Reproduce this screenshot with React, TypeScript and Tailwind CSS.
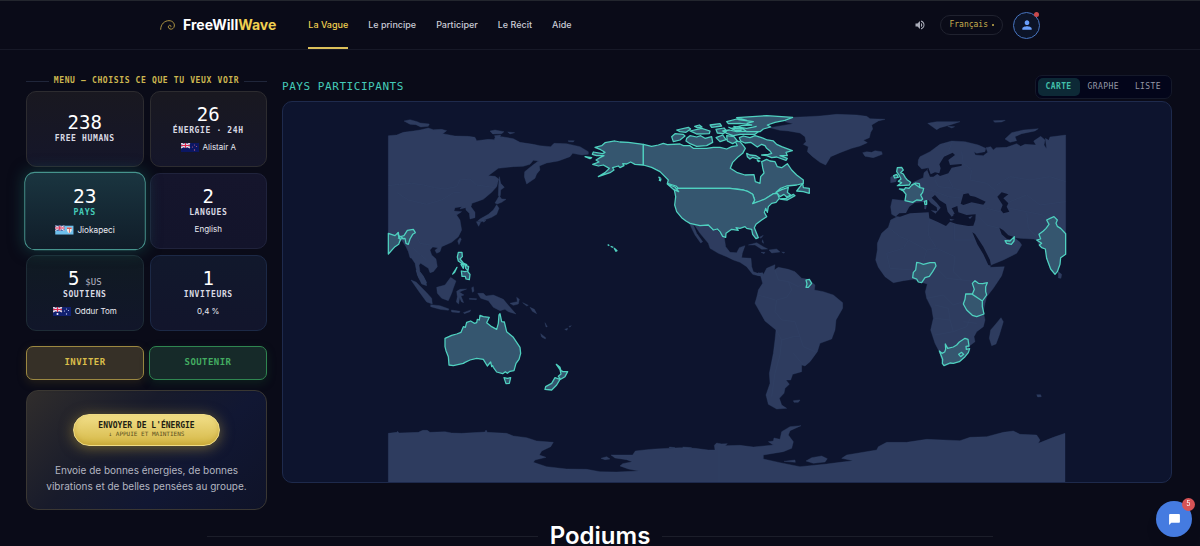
import React, { useState } from "react";
import { MdChatBubble, MdPerson, MdVolumeUp } from "react-icons/md";

const MONO = "font-['DejaVu_Sans_Mono',monospace]";

const navLinks = ["La Vague", "Le principe", "Participer", "Le Récit", "Aide"];
const views = ["Carte", "Graphe", "Liste"];

type FlagCode = "nz" | "fj" | "au";

const Flag: React.FC<{ code: FlagCode }> = ({ code }) => {
  const field = code === "fj" ? "#6fc0ec" : code === "nz" ? "#0b1763" : "#10206f";
  return (
    <svg viewBox="0 0 36 18" className="h-[9px] w-[18px]" aria-hidden="true">
      <rect width="36" height="18" fill={field} />
      <rect width="18" height="10" fill="#26357e" />
      <path d="M0 0L18 10M18 0L0 10" stroke="#f2dce4" strokeWidth="2.4" />
      <path d="M9 0V10M0 5H18" stroke="#f7e9ee" strokeWidth="4" />
      <path d="M9 0V10M0 5H18" stroke="#d8274f" strokeWidth="2.2" />
      {code === "fj" && (
        <g>
          <path d="M23 4h9v6q-1 4-4.500 5q-3.500-1-4.500-5z" fill="#f4e7e4" />
          <path d="M23 4h9v3h-9zM27 7h1.500v7h-1.500z" fill="#cf5a55" />
        </g>
      )}
      {code === "au" && <circle cx="9" cy="14" r="2" fill="#eef1ff" />}
      {code !== "fj" && (
        <g fill={code === "nz" ? "#b95b86" : "#c4cdf3"}>
          <circle cx="27" cy="4" r="1.200" />
          <circle cx="23" cy="8" r="1.200" />
          <circle cx="31" cy="7" r="1.200" />
          <circle cx="27" cy="14" r="1.300" />
        </g>
      )}
    </svg>
  );
};

interface Stat {
  id: string;
  value: string;
  unit?: string;
  label: string;
  note?: string;
  flag?: FlagCode;
  tone: string;
}

const stats: Stat[] = [
  { id: "humans", value: "238", label: "Free Humans", tone: "border-[#2d2c30] from-[#191820] to-[#15162a]" },
  { id: "energy", value: "26", label: "Énergie · 24h", note: "Alistair A", flag: "nz", tone: "border-[#2d2c30] from-[#191820] to-[#15162a]" },
  { id: "countries", value: "23", label: "Pays", note: "Jiokapeci", flag: "fj", tone: "" },
  { id: "languages", value: "2", label: "Langues", note: "English", tone: "border-[#20233c] from-[#15152c] to-[#13142b]" },
  { id: "support", value: "5", unit: "$US", label: "Soutiens", note: "Oddur Tom", flag: "au", tone: "border-[#1e2c36] from-[#101a22] to-[#11162a]" },
  { id: "inviters", value: "1", label: "Inviteurs", note: "0,4 %", tone: "border-[#1c2946] from-[#11182c] to-[#12152c]" },
];

const WorldMap: React.FC = () => (
  <svg viewBox="283 102 888 380" className="block h-auto w-full" role="img" aria-label="Carte des pays participants">
    <g fill="#2e3c5f" stroke="#34456a" strokeWidth="1">
      {/* East Asia and Siberia */}
      <g transform="translate(380 105) scale(.33333)">
        <path d="M25 92L50 90L70 82L100 78L120 75L145 69L160 74L185 73L200 77L188 86L225 93L265 94L285 97L290 107L325 103L343 104L345 97L365 95L400 101L420 112L460 118L480 122L512 125L522 115L560 116L600 125L625 140L625 148L605 150L578 145L570 155L535 168L500 174L478 183L480 195L470 207L465 220L440 237L433 215L434 200L455 183L475 168L460 166L450 178L430 184L400 185L355 190L325 212L345 214L356 222L350 245L335 262L310 283L290 290L276 295L273 305L285 322L285 338L270 342L268 325L258 315L257 308L240 312L245 305L225 308L222 318L245 320L230 330L240 345L245 375L235 395L215 412L185 425L180 440L170 445L165 436L174 428L158 426L150 435L155 450L168 462L172 485L160 500L150 503L145 490L130 480L122 475L117 480L120 500L130 515L138 530L140 542L125 537L112 510L105 475L95 460L90 458L85 440L78 425L65 405L45 425L25 447Z" />
        <path d="M72 48L90 44L112 50L120 54L148 57L145 64L122 66L108 59L90 58ZM330 78L345 75L372 80L365 86L338 87ZM383 81L404 83L390 87ZM343 92L362 90L360 97L346 97ZM564 107L583 107L580 111L566 110Z" />
        <path d="M358 215L362 235L373 247L362 255L361 272L355 272L356 240ZM358 272L365 282L378 283L365 292L352 297L345 294ZM350 299L357 310L350 328L335 337L312 345L305 350L292 349L300 342L325 328L340 315ZM289 350L302 352L296 364ZM306 347L318 345L312 352ZM240 398L244 402L237 419L233 408Z" />
        <path d="M25 242L60 238L95 235L130 240L165 248L195 252L230 245L240 225L270 222L290 240L345 248M50 262L85 285L140 298L185 285L222 262L240 262M106 385L120 415L150 420M100 430L122 450L140 465" fill="none" />
      </g>

      {/* South-East Asia and Pacific islands */}
      <g transform="translate(380 270) scale(.33333)">
        <path d="M108 0L122 8L130 18L140 38L132 41L117 25ZM93 30L108 36L140 68L155 85L157 102L140 96L118 66ZM152 104L180 107L207 117L205 121L180 118L152 110ZM170 52L195 45L212 22L228 33L220 55L215 70L205 92L185 85L172 70ZM230 64L240 58L260 57L238 66L252 75L243 78L251 98L244 95L239 82L236 102L229 96L232 80ZM214 120L240 124L238 128L215 126ZM250 128L272 120L270 125L253 131ZM275 53L280 50L282 64L277 67ZM268 85L290 86L289 89L268 88ZM293 70L310 70L318 78L340 75L370 88L385 106L408 132L385 125L375 118L360 122L340 112L325 92L302 85ZM390 100L412 95L410 82L418 88L415 102L400 106ZM428 98L445 106L440 108ZM450 112L463 118L470 131L457 124ZM495 158L502 170L498 171ZM482 191L497 203L496 207L485 201ZM554 178L563 175L561 181ZM567 169L574 167L569 172Z" />
        <path d="M25 490L50 487L53 484L57 489L115 487L128 481L142 481L150 487L195 485L215 489L245 490L315 486L318 480L322 487L380 490L400 498L440 503L470 513L520 517L512 530L485 543L478 555L498 562L465 570L460 577L500 590L560 597L620 598L660 605L710 606L778 603L745 597L720 588L728 581L757 575L740 569L705 564L693 555L758 555L766 543L800 539L825 537L900 533L945 535L985 540L1005 540L1003 526L1010 519L1023 522V636H25Z" />
        <path d="M663 565L680 560L690 567L675 569ZM868 531L885 533L868 534ZM908 531L935 533L910 535Z" />
      </g>

      {/* Mexico, Central America and the Caribbean */}
      <g transform="translate(580 105) scale(.33333)">
        <path d="M328 355L360 362L385 360L395 375L405 370L420 385L433 398L437 425L450 442L470 443L478 428L495 422L487 445L485 458L513 460L515 485L520 500L533 505L548 503L552 512L535 512L518 508L500 485L480 472L460 465L440 455L415 445L390 430L385 415L360 385L345 362L340 360L350 385L368 410L362 414L345 390L335 370Z" />
        <path d="M505 420L530 413L550 425L563 432L545 433L525 420ZM567 435L590 432L600 441L575 444ZM543 442L555 442L552 446ZM605 441L614 442L612 445ZM538 397L550 391L543 400ZM548 404L551 415L546 411Z" />
      </g>

      {/* South America and eastern Antarctica */}
      <g transform="translate(720 240) scale(.33333)">
        <path d="M115 98L130 104L140 85L165 74L163 90L175 82L205 88L225 95L245 115L265 118L285 135L283 150L310 155L340 165L368 188L368 205L348 240L345 270L335 297L300 310L292 335L270 365L255 378L245 375L245 395L218 403L212 420L198 420L208 433L195 445L192 460L178 475L185 495L200 505L170 507L145 493L138 465L150 430L148 400L160 340L165 300L168 270L135 243L105 190L112 165L115 150L128 130L122 108L110 104Z" />
        <path d="M220 482L240 480L235 487L222 487ZM950 464L962 464L964 470L953 471Z" />
        <path d="M-3 612L22 611L15 617L60 616L100 621L160 615L145 605L160 603L162 594L180 598L185 575L210 560L243 557L210 572L205 585L220 605L215 625L190 635L130 645L130 657L180 668L240 680L320 672L360 667L400 662L365 655L380 645L470 630L475 620L500 607L560 607L620 598L720 602L750 592L800 590L850 577L880 573L900 583L950 585L960 600L955 610L1000 592L1035 580V726H-3Z" />
        <path d="M258 663L275 653L305 648L322 656L315 666L280 670ZM192 664L225 660L226 667Z" />
        <path d="M843 233L850 245L838 285L828 312L815 317L808 295L812 270L825 255ZM1015 95L1025 103L1023 115L1015 114Z" />
        <path d="M165 90L175 120L205 125L215 150L200 172L170 180L165 215L185 240L225 245L240 290L250 320L285 335M168 270L185 300L180 345L165 400L155 470M205 125L235 140L255 128M112 165L140 172L165 180M185 300L220 290L240 290M220 340L250 375" fill="none" />
      </g>

      {/* Greenland, Europe, Africa and western Asia */}
      <g transform="translate(820 105) scale(.33333)">
        <path d="M-150 68L-120 76L-95 78L-60 84L-45 95L-42 110L-50 118L-35 125L-38 140L-22 155L0 172L17 180L26 165L32 155L60 143L95 130L120 123L142 113L130 106L148 98L152 82L158 72L155 60L175 48L195 43L150 41L140 34L110 30L50 28L0 33L-40 35L-80 37L-105 50L-80 56Z" />
        <path d="M128 143L140 140L155 142L165 137L185 140L187 148L160 158L135 154ZM323 55L350 50L420 50L390 60L360 68L350 74ZM383 64L404 65L395 69ZM520 47L556 46L545 51L524 52ZM555 102L575 83L610 75L655 71L645 78L605 86L585 95L590 107L570 112ZM212 217L222 210L230 220L228 230L212 233Z" />
        <path d="M295 165L300 155L330 140L360 118L395 108L435 110L475 120L497 130L495 140L470 145L462 140L466 150L490 152L503 142L498 128L512 125L520 135L528 128L560 127L590 116L602 124L615 118L648 120L641 108L662 94L675 105L672 120L680 132L676 100L686 106L690 96L737 90L737 448L722 458L716 490L705 508L690 490L680 460L675 430L660 425L650 405L640 402L600 400L583 398L600 412L605 420L590 445L550 465L513 480L510 487L553 485L545 512L520 550L500 575L495 595L490 620L495 645L490 665L470 680L462 695L465 710L448 723L445 740L420 767L400 775L372 782L365 767L358 740L345 715L332 675L340 640L335 610L320 580L316 560L322 537L305 532L280 523L250 527L220 533L195 515L175 487L167 465L172 435L172 415L185 385L205 367L212 345L230 336L215 328L212 305L217 283L255 287L258 265L240 252L272 245L280 232L295 225L310 218L312 203L322 195L325 188L305 192L294 180Z" />
        <g stroke="#34456a" fill="none">
          <path d="M205 367L240 395L265 405L250 430L200 445M265 405L320 435L350 430L405 455M328 340L325 390L350 430M403 358L403 405L465 405M320 435L310 470M405 455L400 500L425 525L470 530M200 445L210 490L280 495M350 490L380 520L425 525M320 580L370 570L400 600L430 590M345 640L390 645L400 680L345 690M400 680L440 665L450 640M430 650L470 655M345 600L385 610L390 645" />
          <path d="M385 140L395 115M425 140L430 175L455 195L450 225L500 235L525 255M385 220L400 250L440 260M345 225L355 245L400 250M530 240L570 215L630 225L690 215L737 230M500 310L540 320M470 330L500 360L540 370M570 310L620 320L625 370L650 395M620 320L670 330L690 350M570 290L620 270L660 300L737 290M310 250L345 260L385 275L430 280M255 287L278 292" />
        </g>
      </g>
    </g>

    {/* Inland seas */}
    <g fill="#0d142e" transform="translate(820 105) scale(.33333)">
      <path d="M398 143L405 150L385 165L390 180L425 177L425 182L395 188L385 205L360 213L352 207L340 215L330 215L322 196L325 188L332 208L345 202L358 205L362 190L358 178L372 155Z" />
      <path d="M228 334L238 325L258 324L268 305L285 293L310 291L325 285L333 295L350 307L352 320L362 308L350 293L335 278L345 270L358 285L378 298L383 320L395 335L405 328L395 310L412 303L415 322L440 330L467 328L466 345L460 362L445 363L410 357L390 350L378 363L355 352L328 340L326 322L270 325L240 335Z" />
      <path d="M422 296L430 268L445 265L450 272L465 275L475 280L497 290L490 299L455 292L430 300ZM532 275L545 262L565 268L550 280L565 295L560 305L568 320L550 325L542 315L548 300ZM457 382L465 387L490 425L510 465L513 482L505 480L490 448L472 418ZM538 368L550 376L565 391L585 397L580 405L560 401L545 388ZM400 327L412 325L405 340Z" />
      <path d="M445 337L458 333L450 342ZM388 341L404 344L392 347ZM332 316L352 318L347 326ZM313 302L320 301L318 313L313 312Z" fill="#2e3c5f" />
    </g>

    {/* Participating countries */}
    <g fill="#35566f" stroke="#4fd1c0" strokeWidth="3.800" strokeLinejoin="round">
      <g transform="translate(380 105) scale(.33333)">
        <path d="M25 385L45 392L55 382L57 396L72 392L82 376L100 373L106 383L98 388L90 402L85 418L78 415L75 400L62 402L56 418L45 425L25 447Z" />
        <path d="M52 383L60 402L54 398M58 392L72 402" fill="none" />
        <path d="M235 442L246 442L247 455L240 462L250 474L260 479L245 475L235 468L232 456ZM243 478L252 480L250 490ZM256 480L266 485L264 497L257 490ZM244 498L255 500L262 498L270 508L268 524L258 522L256 514L246 514ZM218 507L231 487L224 502Z" />
      </g>
      <g transform="translate(380 270) scale(.33333)">
        <path d="M195 205L215 196L230 192L243 187L250 170L256 172L260 157L272 153L283 160L290 158L292 148L298 150L300 136L310 140L328 142L320 158L335 170L350 178L355 160L357 135L360 131L365 155L373 156L380 185L400 202L412 220L420 232L422 250L417 268L408 280L402 302L390 304L382 310L376 305L368 311L350 306L340 292L338 287L335 290L332 276L322 288L310 268L290 265L270 270L255 277L250 280L220 287L207 285L205 260L198 242L195 230Z" />
        <path d="M372 323L382 325L392 323L388 340L378 341ZM529 283L540 292L543 302L549 305L563 305L555 320L542 328L535 319L543 312L540 299ZM525 323L540 328L530 345L515 360L495 358L497 350L515 340Z" />
      </g>
      <g transform="translate(580 105) scale(.33333)">
        <path d="M190 118L145 112L120 111L105 108L75 113L65 122L45 127L62 134L75 142L68 146L40 141L37 148L50 152L72 152L60 158L48 165L57 171L38 178L55 183L70 180L88 190L75 203L55 215L90 203L102 195L98 188L115 183L120 188L132 182L128 176L140 177L152 171L165 178L190 180Z" />
        <path d="M190 118L215 124L235 120L250 115L262 119L300 117L310 122L330 122L340 130L380 130L400 127L420 127L440 132L455 125L472 122L465 108L480 110L490 122L496 130L488 145L475 155L458 172L451 190L470 202L495 210L522 209L526 230L540 235L542 215L552 204L548 188L545 170L560 163L570 168L585 170L592 185L605 188L622 176L635 195L650 210L670 225L670 235L650 240L620 243L602 250L588 262L605 254L625 247L622 262L632 270L620 276L612 268L600 275L592 265L580 266L555 282L540 288L518 296L524 285L518 268L505 260L490 255L450 250L295 250L288 243L262 235L265 225L240 200L215 187L190 180Z" />
        <path d="M295 250L450 250L490 255L505 260L518 268L524 285L518 296L540 288L555 282L580 266L592 265L598 280L588 292L575 295L565 305L562 322L557 310L553 322L560 335L545 345L528 358L523 368L535 398L528 401L518 388L515 373L500 370L495 365L480 370L468 368L475 376L455 373L438 385L437 397L428 394L420 380L412 372L400 375L385 360L360 362L330 355L318 348L305 338L290 320L284 300L287 275L283 255Z" />
        <path d="M262 237L285 246L296 260L280 253ZM235 216L240 218L238 228M243 220L241 229M650 258L668 235L670 248L688 250L688 265L670 260ZM600 282L618 280L640 268L645 272L622 285ZM83 419L88 422M92 424L100 427M103 430L111 437L108 439ZM15 155L35 158L30 161Z" />
        <path d="M275 95L285 86L310 88L315 93L300 105L280 110ZM290 75L325 67L332 72L318 82L300 80ZM320 100L330 92L350 96L362 92L375 100L395 95L398 112L380 122L350 124L330 116L318 108ZM330 78L365 70L390 78L388 86L350 87L340 82ZM344 64L358 60L366 66L352 68ZM390 60L420 56L425 63L395 67ZM408 73L432 69L440 78L430 86L412 84ZM408 98L428 90L438 104L420 110ZM440 92L462 95L472 108L458 116L442 108ZM428 78L448 75L470 80L500 78L535 80L525 88L480 88L460 92L440 85Z" />
        <path d="M440 50L470 42L500 46L470 38L560 32L638 37L615 46L585 52L562 60L572 66L550 72L540 80L500 80L490 72L455 70L485 62L515 60L480 55L445 56ZM460 64L500 70L530 64M445 66L465 76L485 76M475 44L520 50L500 55" />
        <path d="M478 98L490 93L510 98L525 92L545 98L562 105L580 108L590 118L605 125L637 137L618 142L622 152L600 152L622 160L618 166L590 156L575 158L560 152L545 150L565 148L575 145L570 138L560 130L555 122L545 118L532 126L512 112L495 114L482 108ZM500 145L510 150L528 152L540 160L532 162L518 157L510 162L502 155ZM532 166L540 168L535 170Z" />
      </g>
      <g transform="translate(720 240) scale(.33333)">
        <path d="M258 120L268 118L275 130L265 142L258 142L261 132ZM757 130L765 122L775 130L788 131L802 128L797 140L797 155L800 165L787 183L757 163L763 148ZM737 162L755 162L787 183L787 200L792 222L770 230L757 226L740 210L730 192L735 178Z" />
        <path d="M658 333L666 340L674 336L677 328L676 312L683 325L700 321L710 315L718 306L735 295L744 298L747 318L738 319L739 328L749 326L745 338L735 350L718 365L700 370L690 369L672 377L667 370L668 358ZM716 343L725 337L731 343L722 350Z" />
      </g>
      <g transform="translate(820 105) scale(.33333)">
        <path d="M232 188L245 187L250 195L242 203L250 207L256 218L262 225L272 232L268 240L252 241L232 242L245 233L235 229L243 222L237 210L230 200ZM221 212L230 208L235 217L224 219Z" />
        <path d="M274 242L283 236L300 248L311 250L308 262L302 270L308 282L304 286L290 285L278 292L255 287L258 268L250 258L238 252L253 254L256 248L267 250ZM274 240L287 234L298 236L300 248M313 289L320 287L320 298L315 299Z" />
        <path d="M290 472L300 474L310 478L330 473L345 473L348 483L338 500L328 514L315 518L305 533L295 531L290 522L278 518L280 502L287 495ZM555 407L570 408L583 395L582 408L574 418L560 415Z" />
        <path d="M680 345L690 340L702 335L712 345L708 355L712 364L722 370L735 384L737 386L737 448L722 458L720 478L712 500L705 508L692 492L680 460L676 432L665 428L658 420L665 415L650 405L662 402L657 388L670 378L678 370L687 358Z" />
      </g>
    </g>
  </svg>
);

const App: React.FC = () => {
  const [selected, setSelected] = useState("countries");
  const [view, setView] = useState("Carte");

  return (
    <div className="min-h-screen overflow-hidden border-t border-[#23262e] bg-[#0a0b18] font-[Inter,sans-serif] text-[#e9eaf1]">
      {/* Header */}
      <header className="border-b border-[#171927]">
        <div className="mx-auto flex h-12 max-w-[880px] items-center">
          <a href="#" className="flex items-center gap-2 text-sm font-bold text-white">
            <svg viewBox="0 0 45 30" className="h-[10px] w-[15px]" fill="none" stroke="#ad9442" strokeWidth="3" strokeLinecap="round" aria-hidden="true">
              <path d="M2 28C2 12 14 2 27 2C38 2 44 10 43 18C42 25 36 29 30 27C24 25 23 18 28 16C32 15 35 19 32 21" />
            </svg>
            <span>
              FreeWill<span className="text-[#f0d050]">Wave</span>
            </span>
          </a>

          <nav className="ml-8 flex h-full gap-5 text-[9px] font-medium">
            {navLinks.map((link, i) => (
              <a
                key={link}
                href="#"
                className={`flex items-center border-y-2 border-t-transparent ${
                  i === 0 ? "border-b-[#dcc05a] text-[#f0d050]" : "border-b-transparent text-[#c9cbd6]"
                }`}
              >
                {link}
              </a>
            ))}
          </nav>

          <div className="ml-auto flex items-center gap-[10px]">
            <button type="button" aria-label="Son" className="mr-1 text-[#a9acb8]">
              <MdVolumeUp size={12} />
            </button>
            <button type="button" className={`flex h-5 items-center gap-1 rounded-full border border-[#20222f] px-2 text-[8px] text-[#c9b04e] ${MONO}`}>
              Français
              <span className="size-[2px] rounded-full bg-[#c9b04e]" />
            </button>
            <button type="button" aria-label="Profil" className="relative flex size-[27px] items-center justify-center rounded-full border border-[#4774bf] bg-[#0c1428] text-[#6a9ffb]">
              <MdPerson size={14} />
              <span className="absolute -top-px right-0 size-[5px] rounded-full bg-[#c8494c]" />
            </button>
          </div>
        </div>
      </header>

      <main>
        <section className="flex gap-[15px] pl-[26px] pr-7 pt-[25px]">
          {/* Side menu */}
          <aside className="w-[241px] shrink-0">
            <h2 className={`flex h-3 items-center gap-[5px] whitespace-nowrap text-[8px] font-bold uppercase tracking-[0.08em] text-[#cdb750] ${MONO}`}>
              <span className="h-px flex-1 bg-[#20263a]" />
              Menu — choisis ce que tu veux voir
              <span className="h-px flex-1 bg-[#20263a]" />
            </h2>

            <div className="mt-1 grid grid-cols-2 gap-[6px]">
              {stats.map((stat) => {
                const active = stat.id === selected;
                return (
                  <button
                    key={stat.id}
                    type="button"
                    onClick={() => setSelected(stat.id)}
                    className={`flex h-[76px] flex-col items-center justify-center rounded-[10px] border pb-[2px] bg-gradient-to-b ${
                      active
                        ? "z-10 scale-[1.03] border-[#46948d] from-[#1a3540] to-[#101d29] shadow-[0_0_14px_#1b665f80]"
                        : stat.tone || "border-[#20233c] from-[#15152c] to-[#13142b]"
                    }`}
                  >
                    <span className={`flex h-[22px] items-baseline text-[19px] leading-[22px] text-white ${MONO}`}>
                      {stat.value}
                      {stat.unit && <span className="ml-1.5 text-[9px] leading-3 text-[#b3b6c2]">{stat.unit}</span>}
                    </span>
                    <span className={`text-[8px] font-bold uppercase leading-3 tracking-[0.08em] ${MONO} ${active ? "text-[#45cbb9]" : "text-[#d9dae3]"}`}>
                      {stat.label}
                    </span>
                    {stat.note && (
                      <span className="mt-1 flex items-center gap-1 text-[8px] leading-3">
                        {stat.flag && <Flag code={stat.flag} />}
                        {stat.note}
                      </span>
                    )}
                  </button>
                );
              })}
            </div>

            <div className={`mt-[15px] grid grid-cols-2 gap-[5px] text-[9px] font-bold uppercase tracking-wider ${MONO}`}>
              <button type="button" className="h-[34px] rounded-[7px] border border-[#9c8841] bg-[#363027] uppercase text-[#d9bd4a] shadow-[0_3px_10px_#57491e55]">
                Inviter
              </button>
              <button type="button" className="h-[34px] rounded-[7px] border border-[#2f8650] bg-[#162a29] uppercase text-[#43ac61] shadow-[0_3px_10px_#174a2b55]">
                Soutenir
              </button>
            </div>

            {/* Energy */}
            <div className="mt-[10px] flex h-[120px] flex-col items-center rounded-xl border border-[#3a3733] bg-[linear-gradient(135deg,#302d2c_0%,#181b2b_38%,#111733_65%,#0f1328_100%)] pt-[23px]">
              <button
                type="button"
                className={`flex h-8 w-[147px] flex-col items-center justify-center rounded-full border border-[#f0dc84] bg-gradient-to-b from-[#f2df88] to-[#d5b844] pb-[2px] text-[#211d12] shadow-[0_2px_14px_#c9a93b80,inset_0_-2px_5px_#b9962c80] ${MONO}`}
              >
                <span className="text-[8px] font-bold uppercase leading-[9px]">Envoyer de l'énergie</span>
                <span className="text-[6px] uppercase leading-[7px] text-[#5c5020]">↓ Appuie et maintiens</span>
              </button>
              <p className="mt-4 text-center text-[10px] leading-4 text-[#b3b5c0]">
                Envoie de bonnes énergies, de bonnes
                <br />
                vibrations et de belles pensées au groupe.
              </p>
            </div>
          </aside>

          {/* Map */}
          <div className="min-w-0 flex-1">
            <div className="flex h-6 items-center justify-between">
              <h2 className={`text-[11px] uppercase tracking-wider text-[#45cbb9] ${MONO}`}>Pays participants</h2>
              <div className={`flex h-6 rounded-[7px] border border-[#15192a] bg-[#03051a] p-[2px] text-[8px] font-medium tracking-wider ${MONO}`}>
                {views.map((name) => (
                  <button
                    key={name}
                    type="button"
                    onClick={() => setView(name)}
                    className={`rounded-[5px] px-2 uppercase ${
                      view === name ? "bg-[#0d2936] font-bold text-[#42bfa9]" : "text-[#9497a5]"
                    }`}
                  >
                    {name}
                  </button>
                ))}
              </div>
            </div>
            <div className="mt-[2px] overflow-hidden rounded-[10px] border border-[#1e2a4c] bg-[#0d142e]">
              <WorldMap />
            </div>
          </div>
        </section>

        <section className="mx-auto mt-[10px] flex max-w-[786px] items-center gap-3">
          <span className="h-px flex-1 bg-[#1c1e2a]" />
          <h2 className="text-2xl font-semibold text-white">Podiums</h2>
          <span className="h-px flex-1 bg-[#1c1e2a]" />
        </section>
      </main>

      {/* Chat */}
      <button type="button" aria-label="Messages" className="fixed bottom-[9px] right-2 flex size-9 items-center justify-center rounded-full bg-[#457be0] text-white shadow-lg">
        <MdChatBubble size={13} />
        <span className="absolute -right-[3px] -top-[3px] flex size-[13px] items-center justify-center rounded-full bg-[#d65356] text-[7px]">5</span>
      </button>
    </div>
  );
};

export default App;
